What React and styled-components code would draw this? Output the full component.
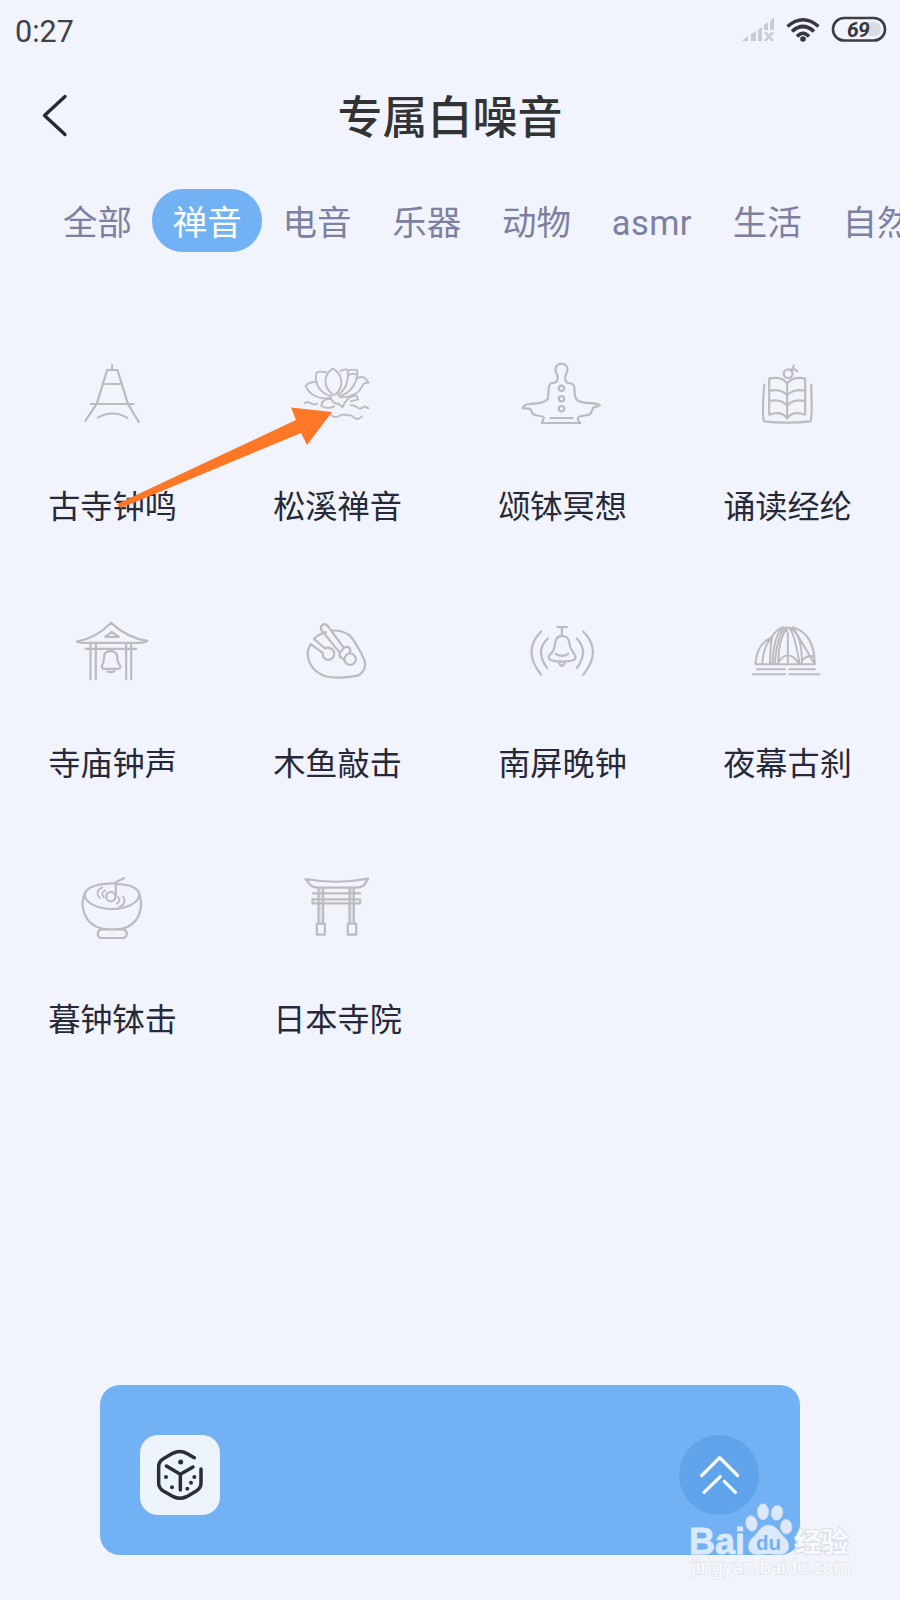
import React from 'react';
import styled, { createGlobalStyle } from 'styled-components';

const GlobalStyle = createGlobalStyle`
  * { box-sizing: border-box; }
  html, body { margin: 0; padding: 0; background: #f1f4fc; }
  body { font-family: Roboto, "Noto Sans CJK SC", sans-serif; }
`;

const Screen = styled.div`
  position: relative;
  display: flex;
  flex-direction: column;
  width: 900px;
  height: 1600px;
  overflow: hidden;
  background: #f1f4fc;
`;

const StatusBar = styled.div`
  display: flex;
  justify-content: space-between;
  align-items: center;
  height: 62px;
  padding: 0 13px 2px 15px;
`;

const Clock = styled.span`
  font-size: 30.5px;
  line-height: 36px;
  color: #3f4146;
  padding-top: 3px;
`;

const StatusIcons = styled.svg`
  width: 150px;
  height: 60px;
`;

const BatteryText = styled.text`
  font: italic 700 21px Roboto, sans-serif;
  letter-spacing: -0.7px;
  fill: #35373c;
`;

const Header = styled.header`
  display: grid;
  grid-template-columns: 110px 1fr 110px;
  align-items: center;
  height: 109px;
  border-bottom: 2px solid #f2f4f8;
`;

const BackButton = styled.button`
  display: flex;
  width: 110px;
  height: 109px;
  padding: 0;
  border: 0;
  background: none;
`;

const Title = styled.h1`
  margin: 0;
  padding-top: 5px;
  text-align: center;
  font-size: 45px;
  line-height: 60px;
  font-weight: 500;
  color: #333333;
`;

const Tabs = styled.nav`
  display: flex;
  padding: 18px 0 0 42.5px;
  height: 179px;
  white-space: nowrap;
`;

const Tab = styled.button`
  flex: none;
  height: 63px;
  padding: 5px 20.4px 0;
  border: 0;
  border-radius: 31px;
  font: 400 34.5px/58px Roboto, "Noto Sans CJK SC", sans-serif;
  letter-spacing: ${(p) => (p.$latin ? '0.4px' : '0')};
  color: ${(p) => (p.$active ? '#ffffff' : '#7d80a0')};
  background: ${(p) => (p.$active ? '#71b1f4' : 'transparent')};
`;

const SoundGrid = styled.main`
  display: grid;
  grid-template-columns: repeat(4, 225px);
  grid-auto-rows: 256.5px;
`;

const Sound = styled.div`
  display: flex;
  flex-direction: column;
  align-items: center;
`;

const SoundIcon = styled.svg`
  width: 90px;
  height: 90px;
  margin-right: 1px;
  fill: none;
  stroke: #bbbcbe;
  stroke-width: 6.6;
  stroke-linecap: round;
  stroke-linejoin: round;
`;

const SoundName = styled.span`
  margin-top: 43px;
  font-size: 32.2px;
  line-height: 48px;
  font-weight: 400;
  color: #272838;
`;

const Player = styled.footer`
  display: flex;
  align-items: center;
  justify-content: space-between;
  width: 700px;
  height: 170px;
  margin: auto 0 45px 100px;
  padding: 10px 41px 0 40px;
  border-radius: 20px;
  background: #71b1f4;
`;

const DiceButton = styled.button`
  width: 80px;
  height: 80px;
  padding: 0;
  border: 0;
  border-radius: 18px;
  background: #ecf3fb;
`;

const ExpandButton = styled(DiceButton)`
  border-radius: 50%;
  background: #5fa4ea;
`;

const Glyph = styled.svg`
  display: block;
  fill: none;
  stroke-linecap: round;
  stroke-linejoin: round;
`;

const Pointer = styled.svg`
  position: absolute;
  left: 110px;
  top: 400px;
  width: 230px;
  height: 115px;
  fill: #fd7727;
`;

const Watermark = styled.svg`
  position: absolute;
  left: 680px;
  top: 1495px;
  width: 180px;
  height: 90px;
`;

const Brand = styled.text`
  font: ${(p) => p.$font};
  fill: ${(p) => p.$fill || '#dbe9fa'};
  stroke: ${(p) => p.$stroke || 'none'};
  stroke-width: ${(p) => p.$outline || '2px'};
  paint-order: stroke;
`;

const tabs = ['全部', '禅音', '电音', '乐器', '动物', 'asmr', '生活', '自然'];

const sounds = [
  {
    name: '古寺钟鸣',
    box: '22.5 0 270 270',
    art: (
      <>
        <path d="M158 46V58M143 60H174M143 60L112 161 78 212M174 60L205 161 238 216M137 102H181M94 162H222M115 203Q158 178 203 203" />
      </>
    ),
  },
  {
    name: '松溪禅音',
    box: '697.5 0 270 270',
    art: (
      <g transform="translate(705 15)" strokeWidth="5.6">
        <path d="M118 120C84 98 86 58 115 41C148 60 147 98 123 118" />
        <path d="M95 52Q81 47 66 53C59 86 76 115 110 123" />
        <path d="M62 81Q43 81 33 93C47 122 76 134 110 129" />
        <path d="M137 48Q149 41 159 44C164 78 152 105 130 120" />
        <path d="M160 61Q173 53 188 59C186 89 165 115 135 124" />
        <path d="M161 47Q174 41 188 46L189 57M188 70Q203 62 212 70L222 83Q207 83 203 93C193 118 164 128 138 127" />
        <path d="M107 132Q83 130 80 152Q98 164 119 154M110 132Q119 148 131 146L144 157Q150 140 163 129M165 127L186 121L191 133L169 139" />
        <path d="M30 144Q40 139 49 145T68 146M169 151Q179 149 188 157T211 154L222 160M106 178Q119 191 133 183T159 181Q170 178 179 188T202 184" />
      </g>
    ),
  },
  {
    name: '颂钵冥想',
    box: '52.5 0 270 270',
    art: (
      <>
        <path d="M170 68C163 51 174 41 186 41S209 51 201 69C192 85 199 98 207 99Q226 100 225 117C225 147 231 154 250 157C274 161 289 158 301 166Q292 171 281 173C277 181 277 189 269 194C253 199 232 195 235 209L242 219H127L133 205C132 190 99 206 96 183C93 173 85 176 70 175Q71 163 91 162C118 160 136 159 145 147L148 112Q150 98 162 99C175 97 179 81 170 68ZM153 204H219" />
        <circle cx="186" cy="115" r="8" />
        <circle cx="186" cy="146" r="8" />
        <circle cx="186" cy="176" r="8" />
      </>
    ),
  },
  {
    name: '诵读经纶',
    box: '727.5 0 270 270',
    art: (
      <>
        <circle cx="866" cy="71" r="13" />
        <path d="M876 64L883 47M877 57Q885 55 893 64M863 99V205M863 101Q847 78 809 86V194Q847 181 863 205M863 101Q879 78 917 86V194Q879 181 863 205M809 122Q847 115 863 137Q879 115 917 122M809 153Q847 146 863 168Q879 146 917 153M794 104Q787 202 794 214Q863 222 933 214Q939 199 935 104" />
      </>
    ),
  },
  {
    name: '寺庙钟声',
    box: '22.5 19.5 270 270',
    art: (
      <>
        <path d="M155 67Q111 113 52 123Q66 129 83 127H229Q252 128 264 121Q204 113 155 67ZM157 94L137 109H178ZM79 145H230M93 129V236M109 129V236M200 129V236M215 129V236" />
        <path d="M127 197Q134 185 134 171C133 152 146 153 154 151C174 154 174 167 174 178Q174 188 182 196Q185 205 174 205H136Q126 205 127 197ZM144 213Q154 217 165 212" />
      </>
    ),
  },
  {
    name: '木鱼敲击',
    box: '697.5 19.5 270 270',
    art: (
      <>
        <path d="M763 115Q781 99 800 95M820 90Q849 89 871 105C884 120 890 132 900 149Q918 180 917 193Q916 213 895 225C866 230 832 236 800 228C764 217 747 190 745 163Q744 145 754 131L790 158C786 184 824 184 824 161C824 141 802 139 797 144L763 115" />
        <path d="M841 157L786 89C778 73 797 65 806 78L853 142C865 134 876 143 871 157M841 157Q836 168 853 177M841 157L853 142" />
        <circle cx="872" cy="176" r="17" />
      </>
    ),
  },
  {
    name: '南屏晚钟',
    box: '52.5 19.5 270 270',
    art: (
      <>
        <path d="M174 80H202M187 81V101M167 127C169 111 177 106 187 106S208 112 209 126C211 148 222 156 227 165Q231 178 218 180Q187 187 158 180Q144 177 149 165C160 156 166 144 167 127ZM168 160Q188 172 206 160M179 185Q180 196 187 196T196 184M145 114Q105 151 143 203M125 93Q67 150 125 223M232 114Q269 153 232 203M251 93Q310 151 251 223" />
      </>
    ),
  },
  {
    name: '夜幕古刹',
    box: '727.5 19.5 270 270',
    art: (
      <>
        <path d="M768 191Q771 130 816 111Q830 86 851 80M880 80Q945 99 946 191ZM768 191H946M788 190Q792 134 817 112Q812 139 812 190M819 190Q823 100 852 81M826 190Q833 101 859 81L865 99V190M837 190Q835 119 863 81M867 81Q885 94 900 190M872 82Q909 102 907 190M834 189Q849 165 864 164Q883 165 897 188M907 180Q923 163 943 168M772 206H857M870 206H946M760 221H857M870 221H960" strokeWidth="6" />
      </>
    ),
  },
  {
    name: '暮钟钵击',
    box: '82.5 9 270 270',
    art: (
      <>
        <path d="M230 72C268 72 298 83 299 104C300 129 258 147 218 147S136 130 136 105C137 80 174 72 217 70H229M137 96C119 136 132 193 187 206Q218 211 247 206C299 195 314 143 299 99M187 208H249Q262 209 262 221T249 234H187Q175 233 175 221T187 208M229 108V67L254 54" />
        <circle cx="214" cy="110" r="14" />
        <path d="M188 82Q164 94 181 114M197 91Q181 98 193 112M236 111Q246 123 232 131M251 110Q263 132 240 140" strokeWidth="5.5" />
      </>
    ),
  },
  {
    name: '日本寺院',
    box: '757.5 9 270 270',
    art: (
      <>
        <path d="M837 84V190H851V84ZM930 84V190H943V84Z" fill="#dfe1e6" stroke="none" />
        <path d="M798 57Q892 74 986 56L973 76Q963 83 948 83H837Q823 83 814 77ZM820 100H962M819 118H962V130H819ZM837 84V190M851 84V190M930 84V190M943 84V190M832 191H856V224H832ZM925 191H950V224H925Z" />
      </>
    ),
  },
];

function StatusGlyphs() {
  return (
    <StatusIcons viewBox="737 0 150 60">
      <g fill="#c9ccd4">
        <path d="M742 41L748 36V41ZM751 34L756 31V41H751ZM758 30L762 27V41H758ZM764 25L768 22V30H764ZM770 21L774 17V30H770Z" />
        <path d="M765 32L773 41M773 32L765 41" stroke="#c9ccd4" strokeWidth="2.5" />
      </g>
      <g fill="none" stroke="#35373c" strokeWidth="3.6">
        <path d="M787.5 26.5Q803 13 818.5 26.5M792 31.5Q803 21.5 814 31.5M797 36.5Q803 30 809 36.5" />
        <circle cx="803" cy="39" r="2.8" fill="#35373c" stroke="none" />
      </g>
      <path d="M868 22H875Q881 23 881 29T875 36H868Z" fill="#d9dce2" />
      <rect x="833" y="18" width="52" height="22.5" rx="11" fill="none" stroke="#3c3e43" strokeWidth="2.6" />
      <BatteryText x="847" y="36.8">69</BatteryText>
    </StatusIcons>
  );
}

export default function App() {
  return (
    <Screen>
      <GlobalStyle />
      <StatusBar>
        <Clock>0:27</Clock>
        <StatusGlyphs />
      </StatusBar>
      <Header>
        <BackButton aria-label="返回">
          <Glyph width="110" height="109" viewBox="0 62 110 109" stroke="#272838" strokeWidth="3.4">
            <path d="M65 96.5L44.5 115.5L65 134.5" />
          </Glyph>
        </BackButton>
        <Title>专属白噪音</Title>
      </Header>
      <Tabs>
        {tabs.map((t) => (
          <Tab key={t} $active={t === '禅音'} $latin={t === 'asmr'}>{t}</Tab>
        ))}
      </Tabs>
      <SoundGrid>
        {sounds.map((s) => (
          <Sound key={s.name}>
            <SoundIcon viewBox={s.box}>{s.art}</SoundIcon>
            <SoundName>{s.name}</SoundName>
          </Sound>
        ))}
      </SoundGrid>
      <Player>
        <DiceButton aria-label="随机">
          <Glyph width="80" height="80" viewBox="151 195 240 240" stroke="#2b2d3a" strokeWidth="10.5">
            <path d="M314 263L293 251Q271 239 249 250L221 266Q207 274 207 290V339Q207 354 221 363L251 380Q271 390 291 380L321 362Q334 354 334 339V297M230 288L272 313L310 291M272 313V360" />
            <g fill="#2b2d3a" stroke="none">
              <circle cx="273" cy="276" r="7.5" />
              <circle cx="229" cy="321" r="6" />
              <circle cx="247" cy="352" r="6" />
              <circle cx="314" cy="321" r="6" />
              <circle cx="304" cy="338" r="6" />
              <circle cx="293" cy="356" r="6" />
            </g>
          </Glyph>
        </DiceButton>
        <ExpandButton aria-label="展开">
          <Glyph width="80" height="80" viewBox="57 105 240 240" stroke="#f8fcff" strokeWidth="10">
            <path d="M125 227L179 173L233 227M132 277L181 230M193 244L226 277" />
          </Glyph>
        </ExpandButton>
      </Player>
      <Pointer viewBox="110 400 230 115">
        <path d="M117 504L296 420L291 407.5L332 412L307 445L301 433L121 508Z" />
      </Pointer>
      <Watermark viewBox="680 1495 180 90">
        <Brand $font='700 37px "Liberation Sans", sans-serif' $stroke="#dbe9fa" $outline="0.8px" x="689" y="1553.5" textLength="56" lengthAdjust="spacingAndGlyphs">Bai</Brand>
        <g fill="#dbe9fa" stroke="#c3d3e8" strokeWidth="0.6">
          <ellipse cx="751.5" cy="1523.5" rx="5.7" ry="7.7" transform="rotate(-12 751.5 1523.5)" />
          <ellipse cx="763" cy="1511.8" rx="5.8" ry="8" />
          <ellipse cx="777" cy="1512.8" rx="5.8" ry="7.5" transform="rotate(10 777 1512.8)" />
          <ellipse cx="786.2" cy="1526.7" rx="5.8" ry="7.4" transform="rotate(-6 786.2 1526.7)" />
          <path d="M768.5 1525C776 1525 780 1533 786 1539C792 1547 788 1556 776 1554.5Q768.5 1553 761 1554.5C749 1556 745 1547 751.5 1539C758 1533 761 1525 768.5 1525Z" />
        </g>
        <Brand $font='700 20px "Liberation Sans", sans-serif' $fill="#71b1f4" x="756" y="1550" textLength="25" lengthAdjust="spacingAndGlyphs">du</Brand>
        <Brand $font='700 27px "Noto Sans CJK SC", sans-serif' $fill="#f8fafe" $stroke="#d8dde7" x="794.5" y="1551.5">经验</Brand>
        <Brand $font='400 19px "Noto Sans", sans-serif' $fill="#fafcff" $stroke="#e3e6ee" x="691" y="1574" textLength="160" lengthAdjust="spacingAndGlyphs">jingyan.baidu.com</Brand>
      </Watermark>
    </Screen>
  );
}
